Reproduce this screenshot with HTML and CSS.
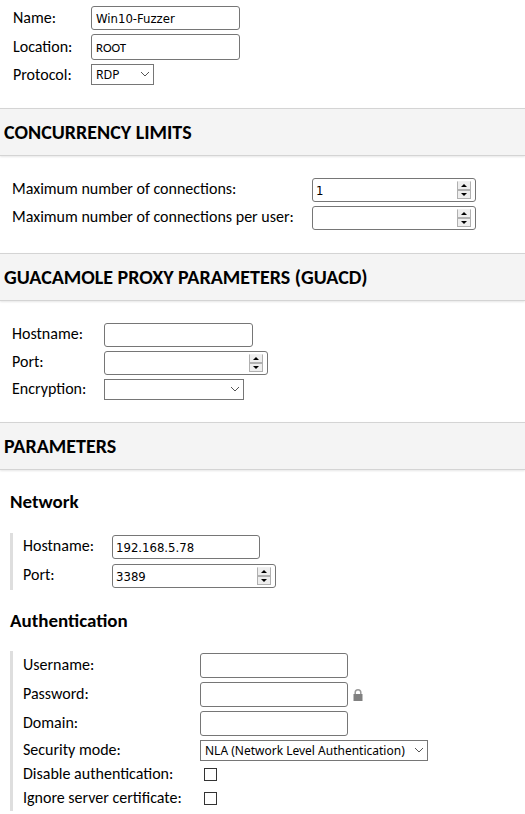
FILE: index.html
```html
<!DOCTYPE html>
<html lang="en">
<head>
<meta charset="utf-8">
<title>Edit Connection</title>
<link rel="stylesheet" href="styles.css">
</head>
<body>
<form>
  <div class="fields general">
    <label for="name">Name:</label>
    <input class="text" id="name" type="text" value="Win10-Fuzzer">
    <label for="location">Location:</label>
    <button class="text location" id="location" type="button">ROOT</button>
    <label for="protocol">Protocol:</label>
    <span class="select protocol">
      <select id="protocol"><option>RDP</option></select>
      <svg class="chevron" viewBox="0 0 10 6"><path d="M1 1l4 4 4-4"/></svg>
    </span>
  </div>

  <h2>Concurrency Limits</h2>
  <div class="fields limits">
    <label for="max">Maximum number of connections:</label>
    <span class="number">
      <input class="text" id="max" type="number" value="1">
      <span class="spin"><button type="button" aria-label="Increase"></button><button type="button" aria-label="Decrease"></button></span>
    </span>
    <label for="max-user">Maximum number of connections per user:</label>
    <span class="number">
      <input class="text" id="max-user" type="number">
      <span class="spin"><button type="button" aria-label="Increase"></button><button type="button" aria-label="Decrease"></button></span>
    </span>
  </div>

  <h2>Guacamole Proxy Parameters (guacd)</h2>
  <div class="fields proxy">
    <label for="proxy-host">Hostname:</label>
    <input class="text" id="proxy-host" type="text">
    <label for="proxy-port">Port:</label>
    <span class="number">
      <input class="text" id="proxy-port" type="number">
      <span class="spin"><button type="button" aria-label="Increase"></button><button type="button" aria-label="Decrease"></button></span>
    </span>
    <label for="encryption">Encryption:</label>
    <span class="select encryption">
      <select id="encryption"><option></option></select>
      <svg class="chevron" viewBox="0 0 10 6"><path d="M1 1l4 4 4-4"/></svg>
    </span>
  </div>

  <h2>Parameters</h2>
  <h3>Network</h3>
  <div class="fields group network">
    <label for="host">Hostname:</label>
    <input class="text" id="host" type="text" value="192.168.5.78">
    <label for="port">Port:</label>
    <span class="number">
      <input class="text" id="port" type="number" value="3389">
      <span class="spin"><button type="button" aria-label="Increase"></button><button type="button" aria-label="Decrease"></button></span>
    </span>
  </div>

  <h3>Authentication</h3>
  <div class="fields group authentication">
    <label for="username">Username:</label>
    <input class="text" id="username" type="text">
    <label for="password">Password:</label>
    <span class="password">
      <input class="text" id="password" type="password">
      <svg class="lock" viewBox="0 0 10 12"><path class="shackle" d="M2.2 6V3.6a2.8 2.8 0 0 1 5.6 0V6"/><path d="M.5 5h9v7h-9z"/></svg>
    </span>
    <label for="domain">Domain:</label>
    <input class="text" id="domain" type="text">
    <label for="security">Security mode:</label>
    <span class="select security">
      <select id="security"><option>NLA (Network Level Authentication)</option></select>
      <svg class="chevron" viewBox="0 0 10 6"><path d="M1 1l4 4 4-4"/></svg>
    </span>
    <label for="disable-auth">Disable authentication:</label>
    <input id="disable-auth" type="checkbox">
    <label for="ignore-cert">Ignore server certificate:</label>
    <input id="ignore-cert" type="checkbox">
  </div>
</form>
</body>
</html>
```

FILE: styles.css
```css
* {
  box-sizing: border-box;
}

body {
  margin: 0;
  background: #fff;
  color: #000;
  font: 16px/18px Carlito, Lato, sans-serif;
}

h2 {
  margin: 0;
  height: 48px;
  padding: 0 4px;
  border-top: 1px solid #d4d4d4;
  border-bottom: 1px solid #d4d4d4;
  box-shadow: 0 1px 2px #0000001a;
  background: #f4f4f4;
  font-size: 20px;
  line-height: 46px;
  text-transform: uppercase;
}

h3 {
  margin: 0;
  padding: 20px 10px 19px;
  font-size: 19px;
  line-height: 24px;
}

.group + h3 {
  padding: 19px 10px 18px;
}

.fields {
  display: grid;
  align-items: center;
  justify-items: start;
  row-gap: 4px;
  padding: 22px 12px;
}

.fields > label {
  padding-bottom: 2px;
}

.general {
  grid-template-columns: 78px 1fr;
  padding: 6px 13px 23px;
}

.fields.general > label {
  padding: 0;
}

.limits {
  grid-template-columns: 300px 1fr;
  padding-bottom: 23px;
}

.proxy {
  grid-template-columns: 92px 1fr;
}

.group {
  margin-left: 10px;
  padding: 2px 10px;
  border-left: 3px solid #dedede;
}

.network {
  grid-template-columns: 89px 1fr;
  row-gap: 5px;
}

.authentication {
  grid-template-columns: 177px 1fr;
}

.text {
  width: 149px;
  height: 24px;
  margin: 0;
  padding: 1px 4px;
  border: 1px solid #767676;
  border-radius: 3px;
  background: #fff;
  color: #000;
  font: 13px "DejaVu Sans Condensed", sans-serif;
}

.group .text {
  width: 148px;
  padding: 1px 3px;
}

.authentication .text {
  height: 25px;
}

.location {
  height: 26px;
  font: 13px Carlito, Lato, sans-serif;
  text-align: left;
}

.number,
.select {
  display: flex;
  position: relative;
}

.fields .number .text {
  width: 164px;
  padding: 1px 3px;
  appearance: textfield;
}

.number .text::-webkit-inner-spin-button {
  appearance: none;
}

.spin {
  display: flex;
  flex-direction: column;
  position: absolute;
  top: 3px;
  right: 5px;
  width: 14px;
  height: 18px;
}

.spin button {
  display: grid;
  flex: 1;
  place-items: center;
  margin: 0;
  padding: 0;
  border: 1px solid #b0b0b0;
  border-top-color: #f0f0f0;
  background: #eee;
}

.spin button:last-child {
  border-top-color: #b0b0b0;
}

.spin button::before {
  border: 3px solid transparent;
  border-top-width: 0;
  border-bottom-color: #000;
  content: "";
}

.spin button:last-child::before {
  border-width: 3px 3px 0;
  border-top-color: #000;
}

select {
  width: 100%;
  height: 21px;
  margin: 0;
  padding: 0 4px;
  appearance: none;
  border: 1px solid #767676;
  border-radius: 0;
  background: #fff;
  color: #000;
  font: 12px "Noto Sans", sans-serif;
}

.chevron {
  position: absolute;
  top: 7px;
  right: 4px;
  width: 10px;
  height: 6px;
  fill: none;
  stroke: #555;
  pointer-events: none;
}

.protocol {
  width: 63px;
}

.encryption {
  width: 140px;
}

.security {
  width: 228px;
}

.password {
  display: flex;
  align-items: center;
  gap: 5px;
}

.lock {
  width: 10px;
  height: 12px;
  fill: #808080;
}

.lock .shackle {
  fill: none;
  stroke: #999;
  stroke-width: 1.5;
}

[type="checkbox"] {
  width: 13px;
  height: 13px;
  margin: 0 4px 2px;
  appearance: none;
  border: 1px solid #333;
  background: #fff;
}

[type="checkbox"]:checked {
  background: #333;
}
```
